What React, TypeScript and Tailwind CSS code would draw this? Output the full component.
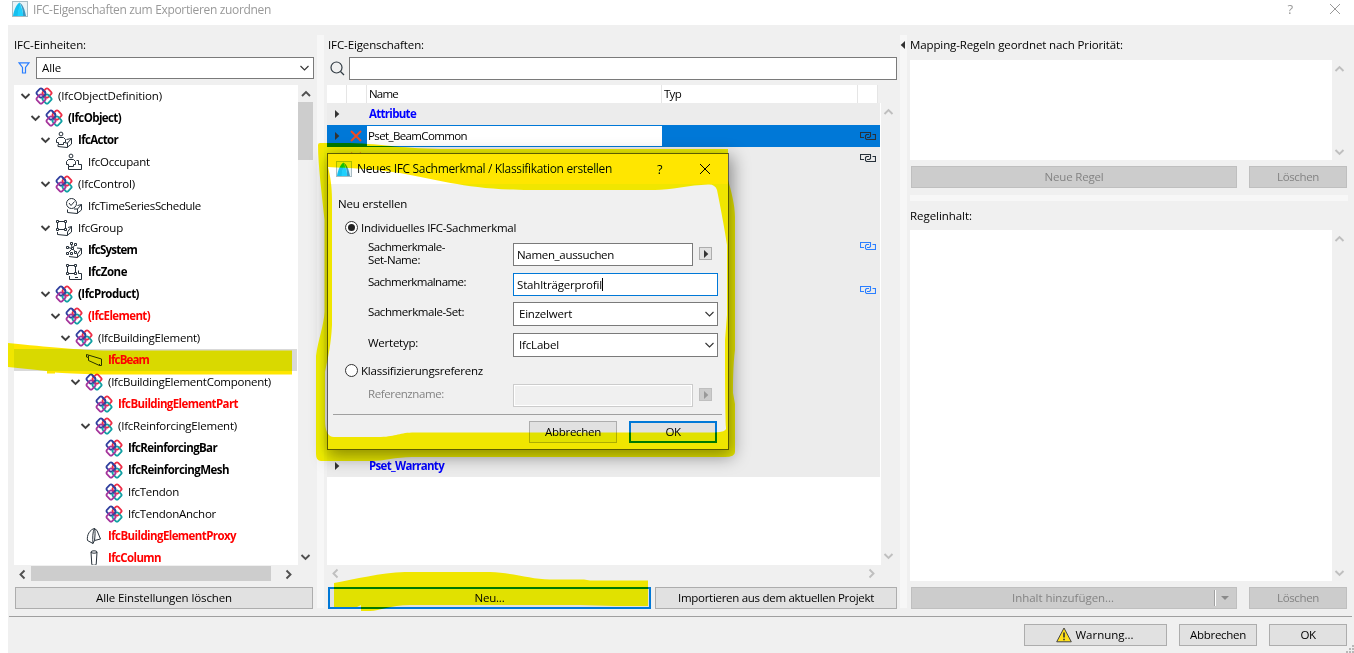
import { useLayoutEffect, useRef, useState, type ReactNode } from "react";

/* Text set to a given width by spreading the difference over its letters. */
function T({ w, children, className = "" }: { w: number; children: string; className?: string }) {
  const ref = useRef<HTMLSpanElement>(null);
  const [gap, setGap] = useState(0);
  useLayoutEffect(() => {
    if (ref.current) {
      const natural = ref.current.getBoundingClientRect().width - gap * children.length;
      setGap((w - natural) / children.length);
    }
  }, [w, children]);
  return (
    <span ref={ref} className={`inline-block shrink-0 whitespace-pre ${className}`} style={{ letterSpacing: `${gap}px` }}>
      {children}
    </span>
  );
}

const turns = {
  down: "M1.500 3 5.500 7 9.500 3",
  up: "M1 7 5 3 9 7",
  left: "M7.500 1.500 3.500 5.500 7.500 9.500",
  right: "M3.500 1.500 7.500 5.500 3.500 9.500",
};

function Chevron({ dir, className = "", thin = false }: { dir: keyof typeof turns; className?: string; thin?: boolean }) {
  return (
    <svg width="10" height="10" viewBox="0 0 10 10" className={`shrink-0 overflow-visible ${className}`} fill="none" stroke="currentColor" strokeWidth={thin ? 1.1 : 1.9}>
      <path d={turns[dir]} />
    </svg>
  );
}

function AppLogo() {
  return (
    <svg width="16" height="16" viewBox="0 0 16 16" className="shrink-0">
      <rect x="0.500" y="0.500" width="15" height="15" fill="#e9f3f6" stroke="#a9bcc4" />
      <path d="M1 15C2 9 4 4 7.500 1.500L8.500 4C7 7 6.500 11 6 15Z" fill="#16c0ef" />
      <path d="M7.500 1.500C11 3.500 13 9 14 15H11C10.800 9 10 5 7.500 1.500Z" fill="#3d97c0" />
      <path d="M5.500 15C6 10 6.800 6.500 8.300 3.500 10 7 11 11 11.200 15Z" fill="#1fd0fd" />
    </svg>
  );
}

function IfcLogo() {
  return (
    <svg width="18" height="18" viewBox="0 0 18 18" fill="none" strokeWidth="1.800">
      <rect x="2.300" y="2.300" width="7.400" height="7.400" rx="1.700" transform="rotate(45 6 6)" stroke="#2f3f9e" />
      <rect x="8.300" y="2.300" width="7.400" height="7.400" rx="1.700" transform="rotate(45 12 6)" stroke="#ee2d46" />
      <rect x="8.300" y="8.300" width="7.400" height="7.400" rx="1.700" transform="rotate(45 12 12)" stroke="#10a0a3" />
      <rect x="2.300" y="8.300" width="7.400" height="7.400" rx="1.700" transform="rotate(45 6 12)" stroke="#a5349b" />
      <path d="M7 2.200 10.500 5.500" stroke="#2f3f9e" />
      <path d="M8 10 11 7" stroke="#2f3f9e" strokeWidth="1.400" />
    </svg>
  );
}

type IconName = "ifc" | "actor" | "occupant" | "schedule" | "group" | "system" | "zone" | "beam" | "proxy" | "column";

function TreeIcon({ name }: { name: IconName }) {
  if (name === "ifc") return <IfcLogo />;
  return (
    <svg width="18" height="18" viewBox="0 0 18 18" fill="none" stroke="#27313a" strokeWidth="1">
      {name === "actor" && (
        <>
          <circle cx="6" cy="3" r="1.900" />
          <path d="M3.500 6.500H8.500L10.500 8.500V11.500H8.500V13.500H3.500V11.500H1.500V8.500ZM3 13.500V15.500L12 16.500 16.500 13V7.500L11.500 8.500M12.500 16.500V12L16.500 7.500M12.500 12H10.500" />
        </>
      )}
      {name === "occupant" && (
        <>
          <circle cx="6" cy="3" r="1.900" />
          <path d="M3.500 6.500H8.500L10.500 8.500V11.500H8.500V13.500H3.500V11.500H1.500V8.500ZM3.500 13.500V16.500H16.500V11.500H13.500V7.500H11.500" />
        </>
      )}
      {name === "schedule" && (
        <>
          <circle cx="6.500" cy="6.500" r="5" />
          <path d="M4 6 6 8.500 9.500 4.500M2.500 12.500V15.500L12 16.500 16.500 13V7.500L12.500 8.500M12.500 16.500V12L16.500 7.500M12.500 12H9" />
        </>
      )}
      {(name === "group" || name === "zone") && (
        <>
          <path d="M2.500 3.500V9.500M10.500 3.500V9.500M3.500 2.500H9.500M3.500 10.500H9.500" />
          <path d="M1.500 1.500H3.500V3.500H1.500ZM9.500 1.500H11.500V3.500H9.500ZM1.500 9.500H3.500V11.500H1.500ZM9.500 9.500H11.500V11.500H9.500Z" />
          <path d={name === "group" ? "M2.500 13V15.500L12 16.500 16.500 13V7.500L13 8.500M12.500 16.500V13L16.500 7.500" : "M4.500 13V16.500H16.500V10.500H13.500V7.500M10 14.500H13"} />
        </>
      )}
      {name === "system" && (
        <>
          <path d="M5.500 1.500H7.500V3.500H5.500ZM9.500 2.500H11.500V4.500H9.500ZM1.500 5.500H3.500V7.500H1.500ZM6.500 6.500H8.500V8.500H6.500ZM1.500 11.500H3.500V13.500H1.500ZM9.500 10.500H11.500V12.500H9.500ZM5.500 11.500H7.500V13.500H5.500Z" />
          <path d="M6.500 3.500 7 6.500M9.500 4.500 8 6.500M3.500 6.500 6.500 7.500M6.500 8.500 3.500 11.500M8.500 8.500 10 10.500M4 15.500 12 16.500 16.500 13V7.500L12 7M12.500 16.500V13L16.500 7.500" />
        </>
      )}
      {name === "beam" && <path d="M1.500 3.500 16.500 8V14.500H14.500L3.500 9.500V6.500L1.500 6ZM3.500 6.500V4.500M14.500 14.500V13" />}
      {name === "proxy" && <path d="M9.500 1.500C5 2.500 1.500 8 2.500 13.500L8 16.500 9.500 13.500 15.500 12 12 3.500ZM9.500 1.500C7.500 5 7.500 11 8 16.500M9.500 1.500C10.500 4 10 9 9.500 13.500" />}
      {name === "column" && (
        <>
          <ellipse cx="9" cy="3" rx="3" ry="1.200" />
          <path d="M6 3 6.800 15.500C8 16.500 10 16.500 11.200 15.500L12 3" />
        </>
      )}
    </svg>
  );
}

type Row = [level: number, icon: IconName, text: string, width: number, open?: boolean, style?: string];
const B = "font-bold";
const R = "font-bold text-[#ff0000]";
const tree: Row[] = [
  [0, "ifc", "(IfcObjectDefinition)", 104, true],
  [1, "ifc", "(IfcObject)", 53, true, B],
  [2, "actor", "IfcActor", 40, true, B],
  [3, "occupant", "IfcOccupant", 62],
  [2, "ifc", "(IfcControl)", 57, true],
  [3, "schedule", "IfcTimeSeriesSchedule", 113],
  [2, "group", "IfcGroup", 45, true],
  [3, "system", "IfcSystem", 49, false, B],
  [3, "zone", "IfcZone", 39, false, B],
  [2, "ifc", "(IfcProduct)", 61, true, B],
  [3, "ifc", "(IfcElement)", 62, true, R],
  [4, "ifc", "(IfcBuildingElement)", 102, true],
  [5, "beam", "IfcBeam", 41, false, R],
  [5, "ifc", "(IfcBuildingElementComponent)", 163, true],
  [6, "ifc", "IfcBuildingElementPart", 120, false, R],
  [6, "ifc", "(IfcReinforcingElement)", 119, true],
  [7, "ifc", "IfcReinforcingBar", 89, false, B],
  [7, "ifc", "IfcReinforcingMesh", 101, false, B],
  [7, "ifc", "IfcTendon", 51],
  [7, "ifc", "IfcTendonAnchor", 88],
  [5, "proxy", "IfcBuildingElementProxy", 128, false, R],
  [5, "column", "IfcColumn", 53, false, R],
];

function Button({ children, className = "" }: { children: ReactNode; className?: string }) {
  return (
    <div className={`flex h-[22px] shrink-0 items-center justify-center border border-[#adadad] bg-[#e1e1e1] ${className}`}>{children}</div>
  );
}

function Disabled({ children, className = "" }: { children: ReactNode; className?: string }) {
  return (
    <div className={`flex h-[22px] shrink-0 items-center justify-center border border-[#bfbfbf] bg-[#cccccc] text-[#838383] ${className}`}>{children}</div>
  );
}

function Link({ color }: { color: string }) {
  return (
    <svg width="16" height="8" viewBox="0 0 16 8" fill="none" stroke={color} strokeWidth="1.100">
      <path d="M4 5.500H0.500V0.500H10.500V4.500L9.500 5.500H7" />
      <path d="M12.500 2.500H15.500V7.500H6.500L5.500 6.500V3.500L6.500 2.500H9" />
    </svg>
  );
}

function Triangle({ className = "" }: { className?: string }) {
  return (
    <svg width="5" height="8" viewBox="0 0 5 8" className={className} fill="currentColor">
      <path d="M0 0V8L4.300 4Z" />
    </svg>
  );
}

function Cross({ className = "" }: { className?: string }) {
  return (
    <svg width="12" height="12" viewBox="0 0 12 12" className={className} fill="none" stroke="currentColor">
      <path d="M1 1 11 11M11 1 1 11" />
    </svg>
  );
}

function VScroll({ className = "" }: { className?: string }) {
  return (
    <div className={`flex flex-col items-center justify-between text-[#bfbfbf] ${className}`}>
      <Chevron dir="up" className="-translate-x-[0.500px]" />
      <Chevron dir="down" className="-translate-x-px" />
    </div>
  );
}

const list: { link?: string; open?: boolean; cross?: boolean; text?: string; w?: number; selected?: boolean }[] = [
  { open: true, text: "Attribute", w: 47 },
  { open: true, cross: true, link: "#27313a", text: "Pset_BeamCommon", w: 99, selected: true },
  { cross: true, link: "#27313a" },
  {},
  {},
  {},
  { link: "#2b7fff" },
  {},
  { link: "#2b7fff" },
  {},
  {},
  {},
  {},
  {},
  {},
  { text: "Pset_", w: 28 },
  { open: true, text: "Pset_Warranty", w: 75 },
];

function Entities() {
  return (
    <section className="flex w-[309px] shrink-0 flex-col pl-1.5">
      <div className="mt-[10px] flex h-5 items-center"><T w={72}>IFC-Einheiten:</T></div>
      <div className="mt-0.5 flex h-[22px] items-center">
        <svg width="12" height="12" viewBox="0 0 12 12" className="ml-1 mr-1.5 shrink-0" fill="none" stroke="#2b7fff" strokeWidth="1.200">
          <path d="M1 0.800H11L7.500 5.500V11H4.500V5.500Z" />
        </svg>
        <div className="flex h-[22px] w-[278px] items-center justify-between border border-[#7a7a7a] bg-white pl-[5px] pr-1">
          <T w={19}>Alle</T>
          <Chevron dir="down" thin className="text-[#333]" />
        </div>
      </div>
      <div className="mt-1.5 flex h-[480px]">
        <div className="w-[284px] overflow-hidden bg-white">
          {tree.map(([level, icon, text, width, open, style]) => (
            <div key={text} className={`flex h-[22px] items-center ${icon === "beam" ? "mr-px bg-[#d9d9d9]" : ""}`}>
              <div className="flex shrink-0 items-center" style={{ marginLeft: 6 + level * 10 }}>
                <div className="w-[15px]">{open && <Chevron dir="down" className="text-[#404040]" />}</div>
                <TreeIcon name={icon} />
              </div>
              <T w={width} className={`ml-[5px] ${style ?? ""}`}>{text}</T>
            </div>
          ))}
        </div>
        <div className="flex w-[15px] flex-col items-center text-[#505050]">
          <Chevron dir="up" className="mt-1" />
          <div className="mt-[3px] h-[58px] w-full bg-[#cdcdcd]" />
          <Chevron dir="down" className="mb-[3px] mt-auto -translate-x-px" />
        </div>
      </div>
      <div className="mt-px flex h-[15px] items-center text-[#505050]">
        <Chevron dir="left" className="ml-[3px]" />
        <div className="ml-1 h-[15px] w-60 bg-[#cdcdcd]" />
        <Chevron dir="right" className="ml-[12px]" />
      </div>
      <Button className="ml-px mt-1.5 w-[298px]"><T w={136}>Alle Einstellungen löschen</T></Button>
    </section>
  );
}

function Properties() {
  return (
    <section className="flex w-[576px] shrink-0 flex-col pl-[3px]">
      <div className="ml-px mt-[10px] flex h-5 items-center"><T w={96}>IFC-Eigenschaften:</T></div>
      <div className="mt-0.5 flex h-[23px] items-center">
        <svg width="15" height="15" viewBox="0 0 15 15" className="-mt-px ml-[3px] mr-1 shrink-0" fill="none" stroke="#333d45" strokeWidth="1.200">
          <circle cx="6.500" cy="6.500" r="5.500" />
          <path d="M10.500 10.500 14 14" />
        </svg>
        <div className="h-[23px] w-[548px] border border-[#7a7a7a] bg-white" />
      </div>
      <div className="mt-[5px] flex h-[18px] w-[551px] items-center bg-white">
        <div className="h-full w-5 border-r border-[#e5e5e5]" />
        <div className="h-full w-5 border-r border-[#e5e5e5]" />
        <div className="flex h-full w-[295px] items-center border-r border-[#e5e5e5] pl-0.5"><T w={29}>Name</T></div>
        <div className="flex h-full w-[196px] items-center border-r border-[#e5e5e5] pl-0.5"><T w={17}>Typ</T></div>
        <div className="h-full w-5 border-r border-[#e5e5e5]" />
      </div>
      <div className="flex h-[462px]">
        <div className="w-[554px] border-r border-white bg-white">
          {list.map((row, i) => (
            <div key={i} className={`flex h-[22px] items-center ${row.selected ? "bg-[#0078d7]" : "bg-[#ececec]"}`}>
              <div className="w-6 pl-2 text-[#333]">{row.open && <Triangle />}</div>
              <div className="w-4">{row.cross && <Cross className="-translate-x-px text-[#f04a23] [stroke-width:2]" />}</div>
              {row.selected ? (
                <div className="flex h-5 w-[295px] items-center bg-white pl-px"><T w={99}>{row.text!}</T></div>
              ) : (
                <div className="flex w-[295px] items-center pl-0.5 font-bold text-[#0000ff]">
                  {row.text && <T w={row.w!}>{row.text}</T>}
                </div>
              )}
              <div className="ml-[198px]">{row.link && <Link color={row.link} />}</div>
            </div>
          ))}
        </div>
        <VScroll className="w-[15px] py-1" />
      </div>
      <div className="mt-[3px] flex h-[10px] w-[549px] justify-between pl-[3px] text-[#bfbfbf]">
        <Chevron dir="left" />
        <Chevron dir="right" />
      </div>
      <div className="ml-px mt-[9px] flex gap-1">
        <div className="flex h-[22px] w-[323px] items-center justify-center border-2 border-[#0078d7] bg-[#e1e1e1]"><T w={30}>Neu...</T></div>
        <Button className="w-[242px]"><T w={196}>Importieren aus dem aktuellen Projekt</T></Button>
      </div>
    </section>
  );
}

function Rules() {
  return (
    <section className="flex grow flex-col pl-[3px]">
      <div className="mt-[10px] flex h-5 items-center"><T w={213}>Mapping-Regeln geordnet nach Priorität:</T></div>
      <div className="mt-[5px] flex h-[100px]">
        <div className="w-[422px] bg-white" />
        <VScroll className="w-4 pb-[3px] pt-1" />
      </div>
      <div className="ml-px mt-1.5 flex gap-3">
        <Disabled className="w-[326px]"><T w={59}>Neue Regel</T></Disabled>
        <Disabled className="w-[98px]"><T w={42}>Löschen</T></Disabled>
      </div>
      <div className="mt-[7px] h-1.5 w-[438px] bg-[#f7f7f7]" />
      <div className="mt-[5px] flex h-5 items-center"><T w={62}>Regelinhalt:</T></div>
      <div className="mt-1 flex h-[351px]">
        <div className="w-[422px] bg-white" />
        <VScroll className="w-4 pb-[3px] pt-1" />
      </div>
      <div className="ml-px mt-1.5 flex gap-3">
        <Disabled className="w-[326px]">
          <div className="flex grow justify-center"><T w={102}>Inhalt hinzufügen...</T></div>
          <div className="h-4 w-0.5 border-l border-r border-l-[#a0a0a0] border-r-white" />
          <svg width="8" height="4" viewBox="0 0 8 4" className="ml-[5px] mr-[7px]"><path d="M0 0H8L4 4Z" fill="#8a8a8a" /></svg>
        </Disabled>
        <Disabled className="w-[98px]"><T w={42}>Löschen</T></Disabled>
      </div>
    </section>
  );
}

function Splitter({ arrow = false }: { arrow?: boolean }) {
  return (
    <div className="mt-[10px] h-[573px] w-[7px] shrink-0 bg-[#f7f7f7]">
      {arrow && <Triangle className="mt-1.5 rotate-180 text-[#333]" />}
    </div>
  );
}

function Radio({ on = false }: { on?: boolean }) {
  return (
    <span className="-mt-px flex size-[13px] shrink-0 items-center justify-center rounded-full border border-[#333] bg-white">
      {on && <span className="size-[7px] rounded-full bg-[#222]" />}
    </span>
  );
}

function Dialog() {
  return (
    <div className="absolute left-[327px] top-[153px] flex h-[297px] w-[402px] flex-col border border-[#5c5c5c] bg-[#f0f0f0] shadow-[2px_5px_16px_2px_rgba(0,0,0,0.4)]">
      <div className="flex h-[30px] shrink-0 items-center bg-white pl-2">
        <AppLogo />
        <T w={255} className="ml-[5px] text-[12px]">Neues IFC Sachmerkmal / Klassifikation erstellen</T>
        <span className="ml-[45px] w-3 text-[13px] font-medium">?</span>
        <Cross className="-mt-px ml-[30px]" />
      </div>
      <div className="ml-[10px] mt-[10px] flex h-5 items-center"><T w={69}>Neu erstellen</T></div>
      <div className="ml-[17px] mt-1 flex h-5 items-center gap-[3px]"><Radio on /><T w={155}>Individuelles IFC-Sachmerkmal</T></div>
      <div className="ml-10 mt-[4px] flex h-[25px] items-center">
        <div className="-mt-1 flex w-[145px] flex-col items-start leading-[13px]"><T w={77}>Sachmerkmale-</T><T w={52}>Set-Name:</T></div>
        <div className="flex h-[23px] w-[180px] items-center border border-[#7a7a7a] bg-white pl-[3px]"><T w={97}>Namen_aussuchen</T></div>
        <div className="-mt-0.5 ml-1.5 flex size-[13px] items-center justify-center border border-[#adadad] bg-[#e1e1e1] text-[#333]"><Triangle className="translate-x-px" /></div>
      </div>
      <div className="ml-10 mt-[6px] flex h-[23px] items-center">
        <div className="-mt-1.5 w-[145px]"><T w={98}>Sachmerkmalname:</T></div>
        <div className="flex h-[23px] w-[205px] items-center border border-[#0078d7] bg-white pl-[3px]">
          <T w={85}>Stahlträgerprofil</T>
          <span className="h-[13px] w-px bg-black" />
        </div>
      </div>
      <div className="ml-10 mt-1.5 flex h-6 items-center">
        <div className="-mt-1 w-[145px]"><T w={96}>Sachmerkmale-Set:</T></div>
        <div className="flex h-6 w-[205px] items-center justify-between border border-[#7a7a7a] bg-white pl-[5px] pr-[3px]">
          <T w={53}>Einzelwert</T><Chevron dir="down" thin className="text-[#333]" />
        </div>
      </div>
      <div className="ml-10 mt-[7px] flex h-6 items-center">
        <div className="-mt-1 w-[145px]"><T w={50}>Wertetyp:</T></div>
        <div className="flex h-6 w-[205px] items-center justify-between border border-[#7a7a7a] bg-white pl-[5px] pr-[3px]">
          <T w={40}>IfcLabel</T><Chevron dir="down" thin className="text-[#333]" />
        </div>
      </div>
      <div className="ml-[17px] mt-[4px] flex h-5 items-center gap-[3px]"><Radio /><T w={122}>Klassifizierungsreferenz</T></div>
      <div className="ml-10 mt-[3px] flex h-[23px] items-center">
        <div className="-mt-1 w-[145px] text-[#838383]"><T w={76}>Referenzname:</T></div>
        <div className="h-[23px] w-[180px] border border-[#cccccc] bg-[#f0f0f0] shadow-[inset_0_0_0_1px_#fff]" />
        <div className="-mt-0.5 ml-1.5 flex size-[13px] items-center justify-center border border-[#bfbfbf] bg-[#cccccc] text-[#999]"><Triangle className="translate-x-px" /></div>
      </div>
      <div className="ml-[5px] mt-[7px] h-px w-[389px] shrink-0 bg-[#a0a0a0]" />
      <div className="ml-[201px] mt-1.5 flex gap-3">
        <Button className="w-[88px]"><T w={56}>Abbrechen</T></Button>
        <div className="flex h-[22px] w-[88px] items-center justify-center border-2 border-[#0078d7] bg-[#e1e1e1]"><T w={15}>OK</T></div>
      </div>
    </div>
  );
}

/* Marker strokes drawn over the window; only channels lighter than the ink change. */
function Marker() {
  return (
    <svg width="1354" height="653" viewBox="0 0 1354 653" className="pointer-events-none absolute left-0 top-0 mix-blend-darken" fill="#ffe600">
      <path d="M8 343C50 347 75 350 110 350.500H292V374.500H100C80 374 62 373 55 372.500V373.500H47V371L8 367Z" />
      <path
        fillRule="evenodd"
        d="M318 145Q318 143 320 143H350C385 144 400 149 450 149H728V180C731 190 735 205 735 217V350C733 365 733 385 733 393L735 404V452Q735 457 725 457H412C395 457 385 461 370 461H321Q316 461 316 454V356C318 340 324 325 324.500 312V220C322 195 318 165 318 145Z
           M328 167C330 175 332 185 332 200V325C331 345 328 358 325 372V420Q325 437 334 437H378C395 437 398 433 412 432.500H715Q727 432 726 428C725 415 725 350 725 340L727 315V245C724 225 720 205 717 190Q715 184 708 184.500C690 185 670 190 655 190H530C470 190 440 180 400 173C375 169 350 168 328 167Z"
      />
      <path d="M334 583C355 579 380 573 405 572H490C515 573 530 579 550 579.500H584L590 580.500H648V606H615L580 605H410C390 605 380 611 370 611H361V605L357 607H334Z" />
    </svg>
  );
}

export default function App() {
  return (
    <div className="relative isolate flex h-[653px] w-[1354px] flex-col overflow-hidden bg-white font-['Open_Sans','Noto_Sans',sans-serif] text-[11.500px] leading-[14px] text-black">
      <header className="flex h-[25px] shrink-0 items-center pb-[7px] pl-3 text-[12px] text-[#999999]">
        <AppLogo />
        <T w={238} className="ml-[5px] mt-px">IFC-Eigenschaften zum Exportieren zuordnen</T>
        <span className="ml-auto mr-[36px] text-[13px]">?</span>
        <Cross className="mr-[13px]" />
      </header>
      <main className="ml-2 flex h-[628px] flex-col bg-[#f0f0f0]">
        <div className="flex h-[591px] shrink-0">
          <Entities />
          <Splitter />
          <Properties />
          <Splitter arrow />
          <Rules />
        </div>
        <div className="ml-px mr-0.5 h-px shrink-0 bg-[#a0a0a0]" />
        <footer className="mt-[7px] flex justify-end gap-3 pr-[7px]">
          <Button className="w-[143px] gap-1 pr-0.5">
            <svg width="16" height="16" viewBox="0 0 16 16">
              <path d="M8 1 15.300 14.800H0.700Z" fill="#ffe01a" stroke="#444" strokeLinejoin="round" />
              <path d="M8 5.500V10.500M8 11.800V13.300" stroke="#333" strokeWidth="1.600" />
            </svg>
            <T w={58}>Warnung...</T>
          </Button>
          <Button className="w-[78px]"><T w={56}>Abbrechen</T></Button>
          <Button className="w-[78px]"><T w={15}>OK</T></Button>
        </footer>
      </main>
      <svg width="8" height="8" viewBox="0 0 8 8" className="absolute bottom-0 right-0" fill="#b8b8b8">
        <path d="M6 0H8V2H6ZM3 3H5V5H3ZM6 3H8V5H6ZM0 6H2V8H0ZM3 6H5V8H3ZM6 6H8V8H6Z" />
      </svg>
      <Dialog />
      <Marker />
    </div>
  );
}
